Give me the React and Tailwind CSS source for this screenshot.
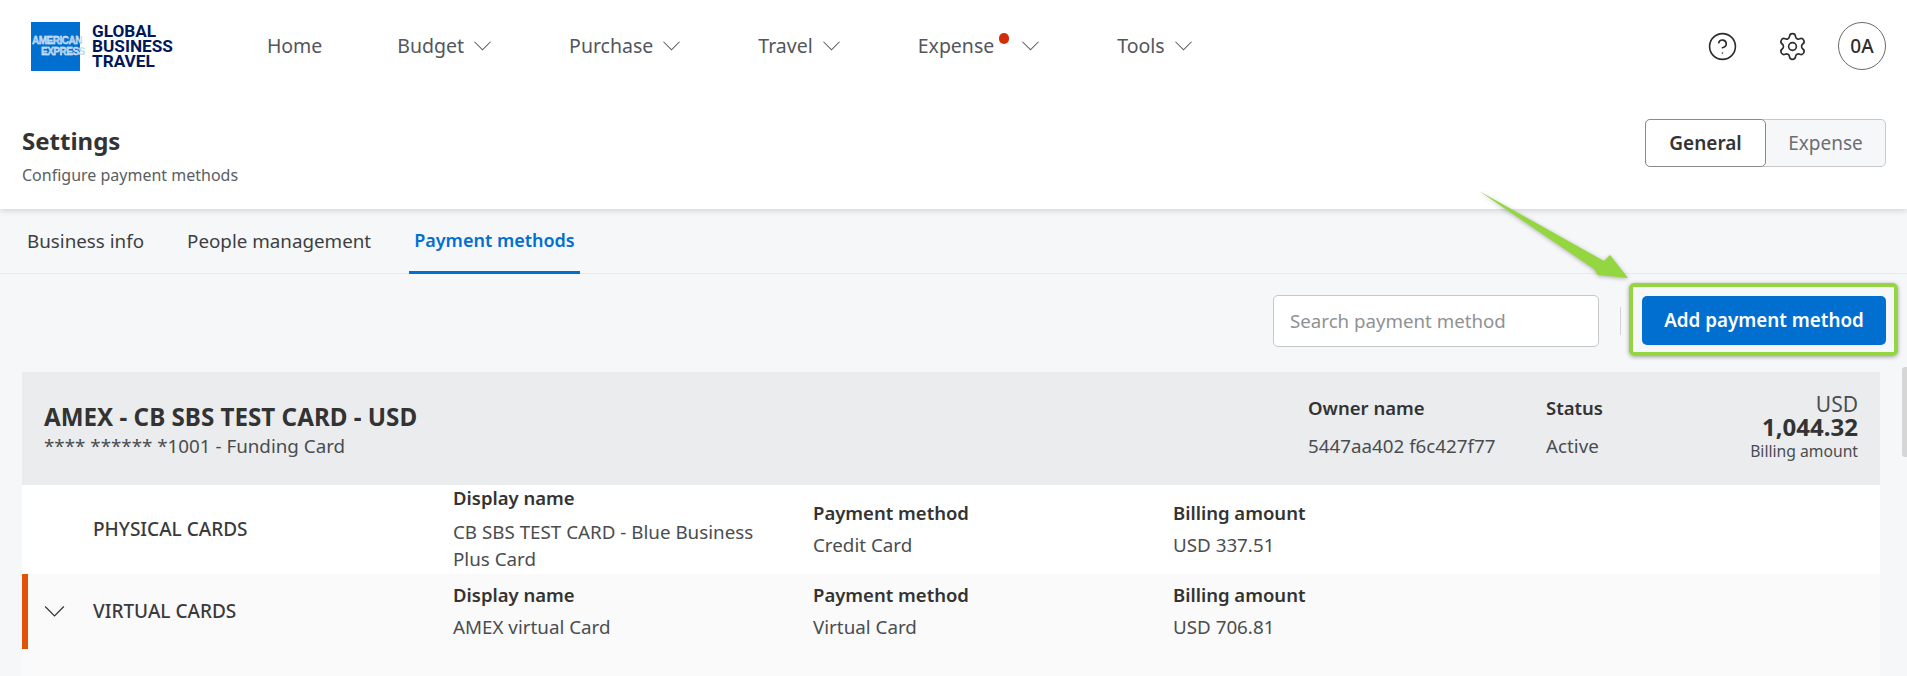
import React from 'react';
import { CircleHelp, Settings } from 'lucide-react';

const Chevron = ({ className = '' }) => (
  <svg viewBox="0 0 18 10" fill="none" stroke="currentColor" strokeWidth="1.1" className={className} aria-hidden="true">
    <polyline points="0.5,0.5 9,9 17.5,0.5" />
  </svg>
);

const Logo = () => (
  <div className="flex items-center gap-3">
    <div className="w-[49px] h-[49px] bg-[#016fd0] flex flex-col justify-center font-['Liberation_Sans',sans-serif] font-bold text-[10px] leading-[11px] text-[#9cc8f0] [-webkit-text-stroke:0.3px_white]">
      <span className="pl-px whitespace-nowrap tracking-[-0.5px]">AMERICAN</span>
      <span className="pl-[10px] whitespace-nowrap tracking-[-0.5px]">EXPRESS</span>
    </div>
    <div className="font-['Roboto',sans-serif] font-bold text-[17.2px] leading-[15px] text-[#00175a]">
      <div>GLOBAL</div>
      <div>BUSINESS</div>
      <div>TRAVEL</div>
    </div>
  </div>
);

const navItems = [
  { label: 'Home' },
  { label: 'Budget', menu: true },
  { label: 'Purchase', menu: true },
  { label: 'Travel', menu: true },
  { label: 'Expense', menu: true, dot: true },
  { label: 'Tools', menu: true },
];

const Nav = () => (
  <nav className="flex items-center gap-[78px] ml-[94px] text-[19.5px] text-[#53565a]">
    {navItems.map((item) => (
      <div key={item.label} className={item.menu ? 'flex items-center' : 'flex items-center -mr-[3px]'}>
        <span>{item.label}</span>
        {item.dot && <span className="w-[10px] h-[11px] rounded-full bg-[#d42c06] ml-[5px] mb-[16px] mr-[3px]" />}
        {item.menu && <Chevron className="w-[17px] h-[10px] text-[#53565a] ml-[10px]" />}
      </div>
    ))}
  </nav>
);

const Field = ({ label, children, className = '', gap = 'mt-[6px]' }) => (
  <div className={className}>
    <div className="font-semibold text-[#333] text-[18.5px] leading-[27px]">{label}</div>
    <div className={`text-[#4a4d50] text-[18.8px] leading-[27px] ${gap}`}>{children}</div>
  </div>
);

export default function App() {
  return (
    <div className="relative h-[676px] overflow-hidden bg-[#f6f7f9] font-['Noto_Sans',sans-serif]">
      <header className="h-[209px] bg-white shadow-[0_2px_6px_rgba(0,0,0,0.14)] relative">
        <div className="h-[92px] flex items-center pl-[31px] pr-[21px]">
          <Logo />
          <Nav />
          <div className="ml-auto flex items-center text-[#2c2c2c]">
            <CircleHelp className="w-[31px] h-[31px]" strokeWidth={1.25} />
            <Settings className="w-[31px] h-[31px] ml-[39px]" strokeWidth={1.25} />
            <div className="w-[48px] h-[48px] ml-[30px] rounded-full border border-[#6b6b6b] flex items-center justify-center text-[19px] font-medium">0A</div>
          </div>
        </div>
        <div className="flex items-start justify-between pl-[22px] pr-[21px] pt-[32px]">
          <div>
            <h1 className="text-[24px] leading-[34px] font-bold text-[#333]">Settings</h1>
            <p className="text-[16px] leading-[22px] mt-[6px] text-[#5b5e62]">Configure payment methods</p>
          </div>
          <div className="flex -mt-[5px] h-[48px] w-[241px] rounded-[5px] border border-[#c8c9cb] bg-[#f6f7f9]">
            <div className="w-[121px] -my-px -ml-px rounded-[5px] border border-[#8a8a8a] bg-white flex items-center justify-center text-[19px] font-semibold text-[#333]">General</div>
            <div className="flex-1 flex items-center justify-center text-[19px] text-[#6b6e72]">Expense</div>
          </div>
        </div>
      </header>

      <div className="h-[65px] flex items-start border-b border-[#e8eaec] pl-[22px] text-[18.8px] text-[#3c3f42]">
        <div className="h-[65px] px-[5px] pt-[18px]">Business info</div>
        <div className="h-[65px] px-[5px] pt-[18px] ml-[33px]">People management</div>
        <div className="h-[65px] px-[5px] pt-[18px] ml-[33px] border-b-[3px] border-[#016fd0] text-[#016fd0] font-semibold text-[18px]">Payment methods</div>
      </div>

      <div className="h-[98px] flex items-start justify-end pt-[21px] pr-[21px]">
        <div className="w-[326px] h-[52px] rounded-[5px] border border-[#c6c7c9] bg-white flex items-center pl-[16px] text-[18.7px] text-[#8f9194]">Search payment method</div>
        <div className="w-px h-[28px] mt-[12px] ml-[21px] mr-[21px] bg-[#d2d3d5]" />
        <button className="w-[244px] h-[49px] mt-px rounded-[5px] bg-[#016fd0] text-white text-[18.8px] font-semibold">Add payment method</button>
      </div>

      <section className="ml-[22px] mr-[27px] text-[#333]">
        <div className="h-[113px] bg-[#ebecee] flex pl-[22px] pr-[22px]">
          <div className="flex-1 pt-[29px]">
            <div className="text-[24.2px] leading-[32px] font-bold">AMEX - CB SBS TEST CARD - USD</div>
            <div className="text-[18.8px] leading-[26px] text-[#4a4d50]">**** ****** *1001 - Funding Card</div>
          </div>
          <div className="flex pt-[22px]">
            <Field label="Owner name" className="w-[238px]" gap="mt-[12px]">5447aa402 f6c427f77</Field>
            <Field label="Status" className="w-[138px]" gap="mt-[12px]">Active</Field>
          </div>
          <div className="w-[174px] text-right pt-[20px] text-[#4a4d50]">
            <div className="text-[21px] leading-[24px]">USD</div>
            <div className="text-[24px] leading-[22px] font-bold text-[#333]">1,044.32</div>
            <div className="text-[15.7px] leading-[24px] mt-[1px]">Billing amount</div>
          </div>
        </div>

        <div className="h-[89px] bg-white flex items-center">
          <div className="w-[431px] pl-[71px] text-[19px] font-medium text-[#3a3a3a]">PHYSICAL CARDS</div>
          <div className="w-[360px] self-start">
            <div className="font-semibold text-[18.5px] leading-[27px] -mt-px">Display name</div>
            <div className="w-[310px] text-[18.8px] leading-[27px] mt-[8px] text-[#4a4d50]">CB SBS TEST CARD - Blue Business Plus Card</div>
          </div>
          <Field label="Payment method" className="w-[360px] mb-[2px]">Credit Card</Field>
          <Field label="Billing amount" className="mb-[2px]">USD 337.51</Field>
        </div>

        <div className="h-[102px] bg-[#fafafa]">
          <div className="h-[75px] flex items-center border-l-[6px] border-[#e35205]">
            <Chevron className="w-[21px] h-[11px] ml-[16px] text-[#333]" />
            <div className="w-[388px] pl-[28px] text-[19px] font-medium text-[#3a3a3a]">VIRTUAL CARDS</div>
            <Field label="Display name" className="w-[360px] mb-[2px]">AMEX virtual Card</Field>
            <Field label="Payment method" className="w-[360px] mb-[2px]">Virtual Card</Field>
            <Field label="Billing amount" className="mb-[2px]">USD 706.81</Field>
          </div>
        </div>
      </section>

      {/* callout drawn over the page */}
      <div className="absolute left-[1629px] top-[283px] w-[269px] h-[73px] rounded-[5px] border-[4px] border-[#94d63f] shadow-[0_1px_4px_rgba(0,0,0,0.35)]" />
      <svg className="absolute left-[1470px] top-[185px] w-[170px] h-[105px] drop-shadow-[0_1px_2px_rgba(0,0,0,0.3)]" viewBox="0 0 170 105" fill="none" aria-hidden="true">
        <polygon points="9,6 134,76 140,70 158,93 128,90 124,84" fill="#94d63f" />
      </svg>
      <div className="absolute left-[1902px] top-[367px] w-[5px] h-[90px] rounded-l-[3px] bg-[#d6d6d6]" />
    </div>
  );
}
